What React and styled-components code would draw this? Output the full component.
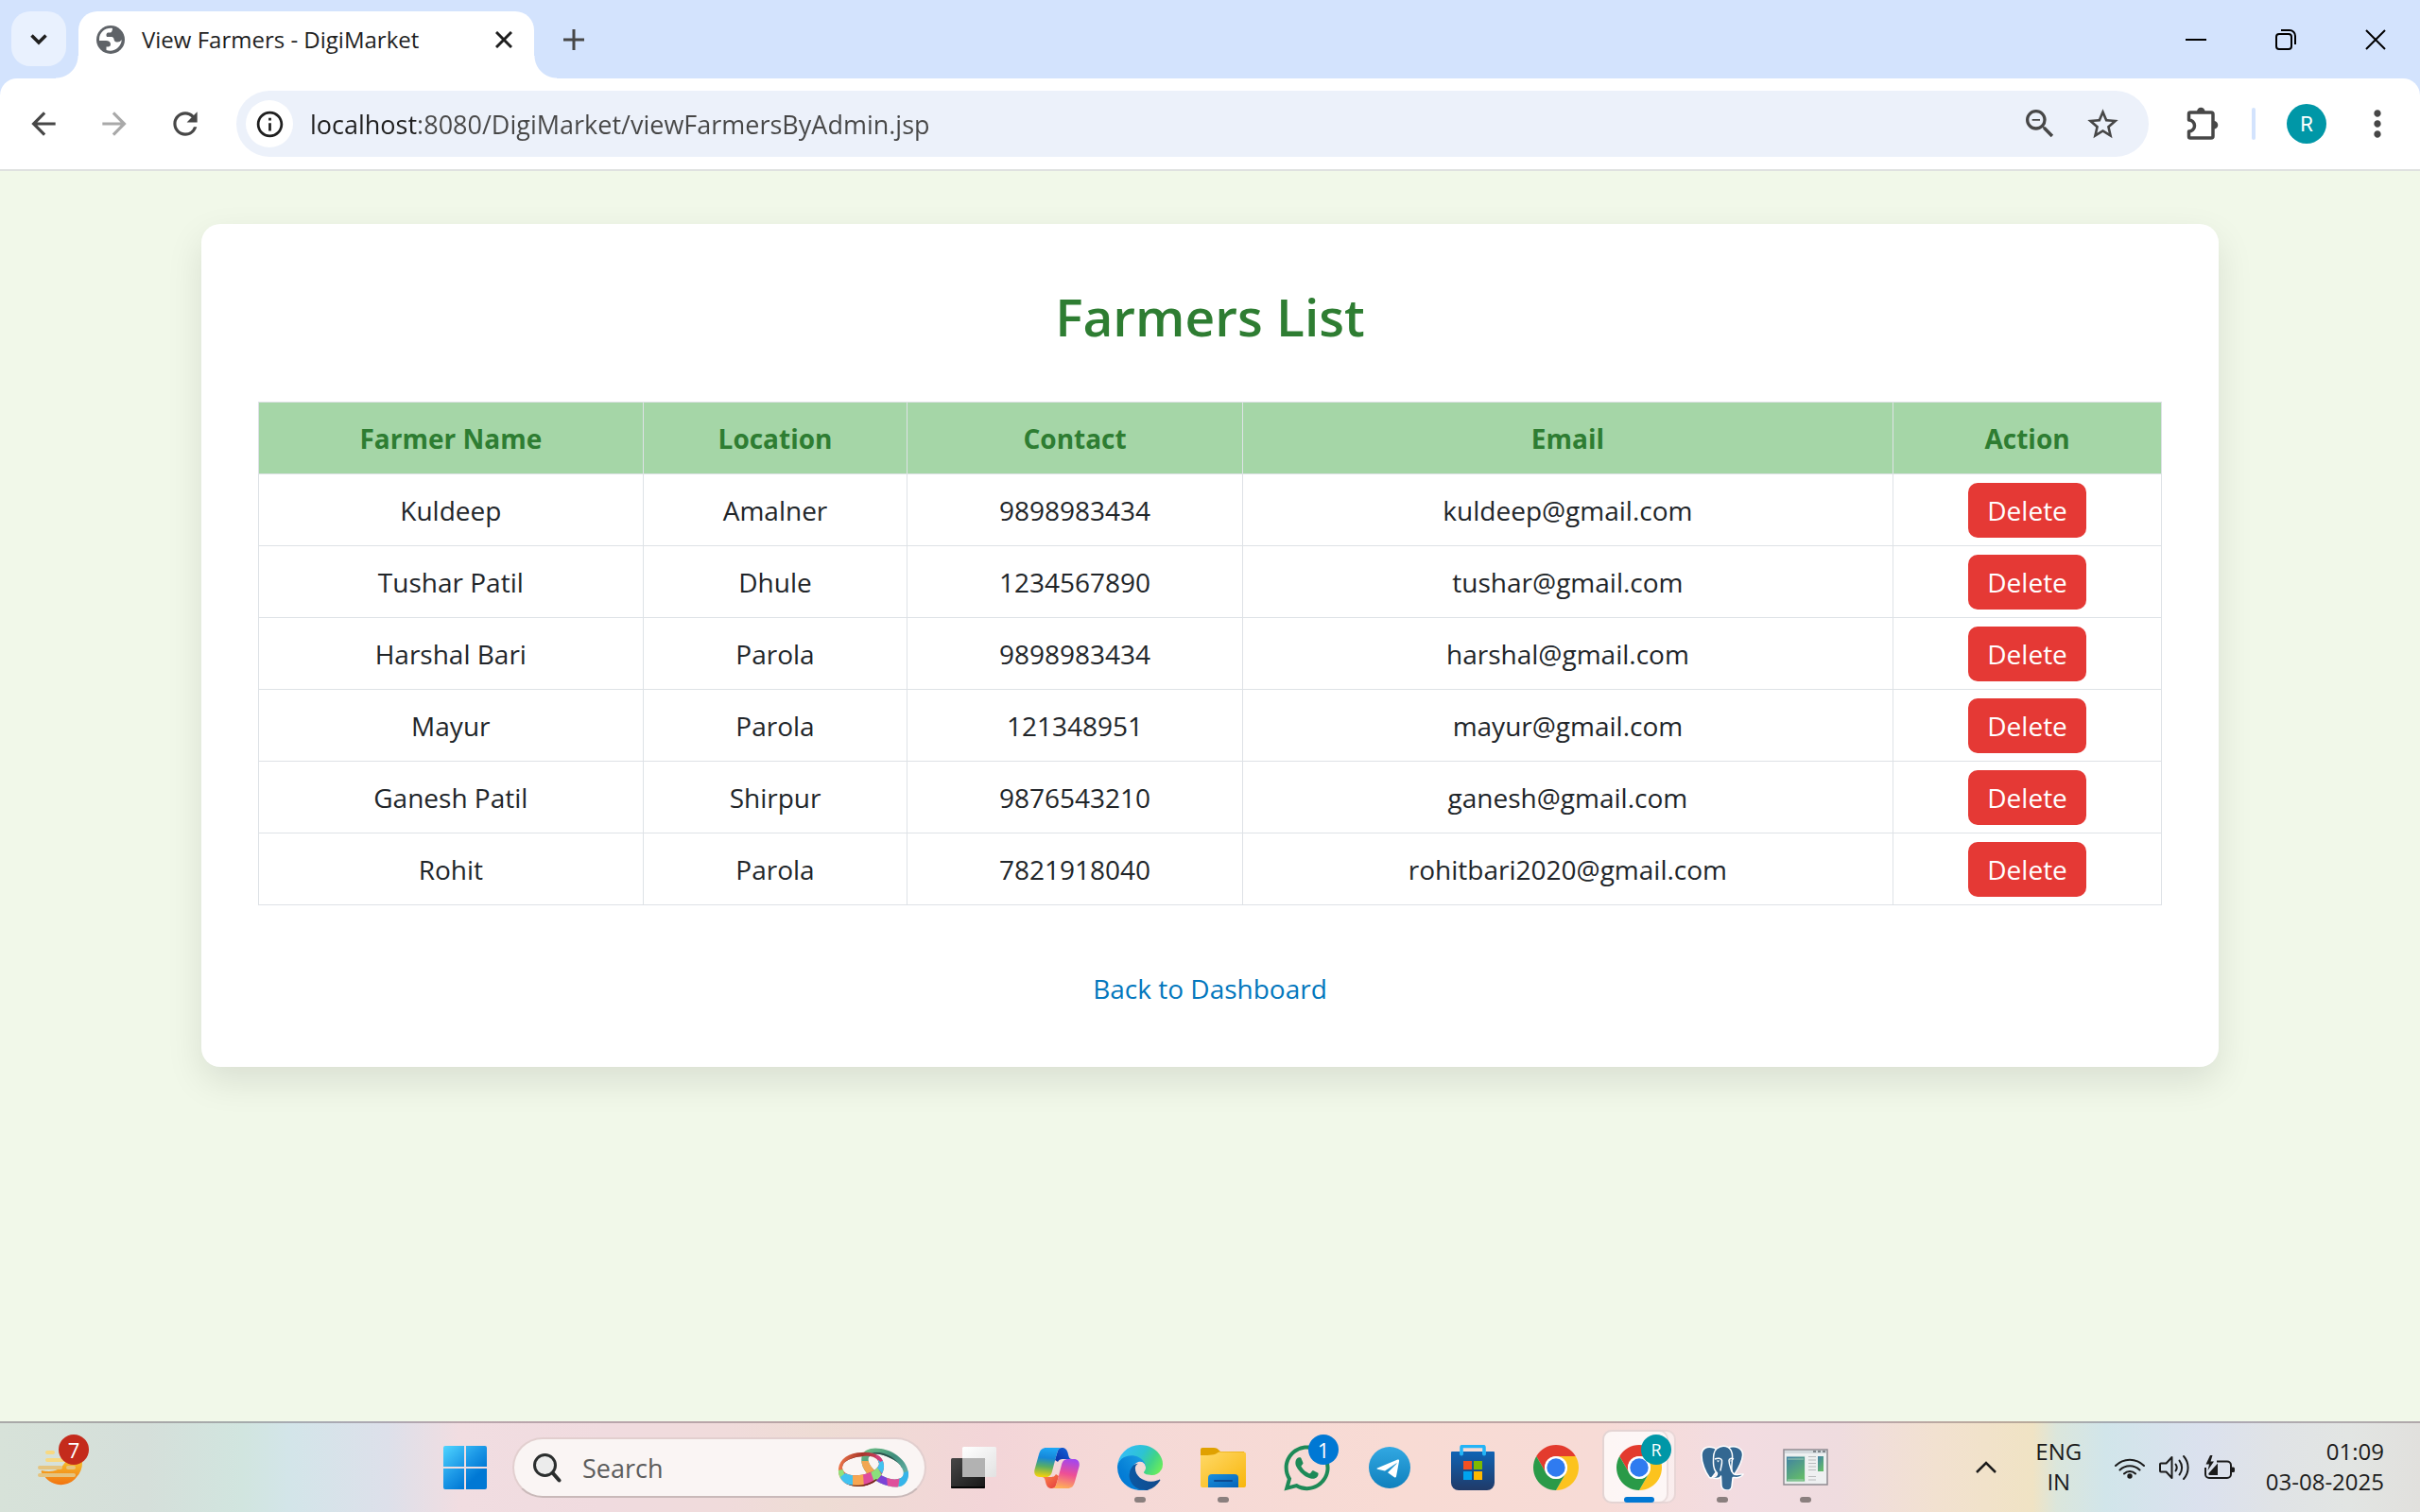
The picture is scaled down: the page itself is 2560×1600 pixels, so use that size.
import React from "react";
import styled, { createGlobalStyle, css } from "styled-components";
import {
  MdArrowBack,
  MdArrowForward,
  MdRefresh,
  MdInfoOutline,
  MdZoomOut,
  MdStarBorder,
  MdMoreVert,
} from "react-icons/md";
import { FaWhatsapp } from "react-icons/fa";

const GlobalStyle = createGlobalStyle`
  *, *::before, *::after { box-sizing: border-box; }
  body {
    margin: 0;
    font-family: "Open Sans", "Noto Sans", sans-serif;
    color: #212529;
    background: #f1f8e9;
  }
  button, input { font-family: inherit; }
`;

const Screen = styled.div`
  min-height: 100vh;
  display: flex;
  flex-direction: column;
`;

const PlainButton = styled.button`
  display: flex;
  align-items: center;
  justify-content: center;
  flex: none;
  padding: 0;
  border: 0;
  background: transparent;
  color: #474747;
`;

/* ---------- browser frame ---------- */

const BrowserFrame = styled.header`
  background: #d3e3fd;
`;

const TabStrip = styled.div`
  display: flex;
  align-items: center;
  height: 83px;
  padding: 12px 0 0 12px;
`;

const TabSearchButton = styled(PlainButton)`
  align-self: flex-start;
  width: 58px;
  height: 58px;
  border-radius: 20px;
  background: #e9f1fe;
  color: #1f1f1f;
`;

const Tab = styled.div`
  position: relative;
  display: flex;
  align-items: center;
  width: 482px;
  height: 71px;
  margin-left: 13px;
  padding: 0 18px 12px 19px;
  border-radius: 20px 20px 0 0;
  background: #fff;

  &::before,
  &::after {
    content: "";
    position: absolute;
    bottom: 0;
    width: 24px;
    height: 24px;
  }
  &::before {
    right: 100%;
    background: radial-gradient(circle at 0 0, transparent 23px, #fff 24px);
  }
  &::after {
    left: 100%;
    background: radial-gradient(circle at 100% 0, transparent 23px, #fff 24px);
  }
`;

const TabTitle = styled.span`
  flex: 1;
  margin-left: 18px;
  font-size: 24px;
  line-height: 32px;
  white-space: nowrap;
  color: #1f1f1f;
`;

const TabAction = styled(PlainButton)`
  width: 28px;
  height: 28px;
  color: #1f1f1f;
`;

const NewTabButton = styled(PlainButton)`
  width: 48px;
  height: 48px;
  margin: 0 0 12px 18px;
`;

const WindowControls = styled.div`
  display: flex;
  margin: 0 0 12px auto;
`;

const WindowButton = styled(PlainButton)`
  width: 95px;
  height: 58px;
  color: #000;
`;

const Toolbar = styled.div`
  display: flex;
  align-items: center;
  height: 98px;
  padding: 0 20px 0 8px;
  border-bottom: 2px solid #dfe1e0;
  border-radius: 18px 18px 0 0;
  background: #fff;
`;

const NavButton = styled(PlainButton)`
  width: 75px;
  height: 60px;
  color: ${(p) => (p.disabled ? "#a9a9a9" : "#474747")};
`;

const AddressBar = styled.div`
  display: flex;
  align-items: center;
  flex: 1;
  height: 70px;
  margin-left: 17px;
  padding: 0 16px 0 10px;
  border-radius: 35px;
  background: #ecf1fa;
`;

const SiteInfoButton = styled(PlainButton)`
  width: 50px;
  height: 50px;
  border-radius: 50%;
  background: #fff;
  color: #1f1f1f;
`;

/* The host is painted darker than the path that follows it. */
const UrlInput = styled.input`
  flex: 1;
  min-width: 0;
  height: 50px;
  margin-left: 18px;
  padding: 0;
  border: 0;
  outline: 0;
  font-size: 27px;
  color: #474747;
  background: linear-gradient(90deg, #1f1f1f 114px, #474747 114px);
  -webkit-background-clip: text;
  background-clip: text;
  -webkit-text-fill-color: transparent;
`;

const AddressAction = styled(PlainButton)`
  width: 66px;
  height: 50px;
`;

const ExtensionsButton = styled(PlainButton)`
  width: 60px;
  height: 60px;
  margin-left: 27px;
`;

const ToolbarDivider = styled.span`
  width: 4px;
  height: 34px;
  margin: 0 33px 0 22px;
  border-radius: 2px;
  background: #d3e3fd;
`;

const ProfileButton = styled(PlainButton)`
  width: 42px;
  height: 42px;
  border-radius: 50%;
  background: #0097a7;
  color: #fff;
  font-family: Roboto, sans-serif;
  font-size: 22px;
`;

const MenuButton = styled(PlainButton)`
  width: 50px;
  height: 60px;
  margin-left: 29px;
`;

/* ---------- page ---------- */

const Page = styled.main`
  flex: 1;
  padding: 56px 40px;
`;

const Card = styled.section`
  max-width: 2134px;
  margin: 0 auto;
  padding: 60px;
  border-radius: 20px;
  background: #fff;
  box-shadow: 0 15px 38px rgba(0, 0, 0, 0.1);
  text-align: center;
`;

const Title = styled.h1`
  margin: 0 0 52px;
  font-size: 55px;
  font-weight: 600;
  line-height: 76px;
  color: #2e7d32;
`;

const FarmersTable = styled.table`
  width: 100%;
  table-layout: fixed;
  border-collapse: collapse;
  font-size: 28px;
  line-height: 42px;
`;

const Column = styled.col`
  width: ${(p) => p.$share}%;
`;

const cell = css`
  height: 76px;
  padding: 0 8px;
  border: 1px solid #dee2e6;
  text-align: center;
  vertical-align: middle;
`;

const HeadCell = styled.th`
  ${cell}
  background: #a5d6a7;
  color: #2e7d32;
  font-weight: 700;
`;

const Cell = styled.td`
  ${cell}
`;

const DeleteButton = styled.button`
  display: block;
  height: 58px;
  margin: 0 auto;
  padding: 0 20px;
  border: 0;
  border-radius: 10px;
  background: #e53935;
  color: #fff;
  font-size: 28px;
`;

const BackLink = styled.a`
  display: inline-block;
  margin-top: 66px;
  font-size: 28px;
  line-height: 45px;
  color: #0277bd;
  text-decoration: none;
`;

/* ---------- taskbar ---------- */

const Taskbar = styled.footer`
  display: flex;
  align-items: stretch;
  height: 96px;
  border-top: 2px solid rgba(90, 70, 80, 0.36);
  background: linear-gradient(
    90deg,
    #d7e2d9 0%,
    #d5dfda 6%,
    #d1e5df 10%,
    #d3e5e9 12%,
    #dde0ea 16%,
    #f1dde1 19%,
    #f0dbdf 25%,
    #f0dbdb 30%,
    #eedcd4 34%,
    #f3d5d8 41%,
    #f5d9d7 46%,
    #f8dbd4 58%,
    #f7dbd6 66%,
    #f2dce1 72%,
    #efdcdf 76%,
    #f2e1d0 80%,
    #f0e3c4 84%,
    #dbe6dc 85%,
    #d1e5ea 87%,
    #dbe1ee 91%,
    #e0e3e6 94%,
    #e2e5e3 97%,
    #e1e0dd 100%
  );
`;

const WidgetArea = styled.div`
  display: flex;
  align-items: center;
  width: 448px;
  padding-left: 34px;
`;

const TaskButton = styled(PlainButton)`
  position: relative;
  width: 88px;
  height: 94px;
`;

const WidgetButton = styled(TaskButton)`
  width: 60px;
`;

const CountBadge = styled.span`
  position: absolute;
  top: 12px;
  right: ${(p) => p.$right}px;
  display: flex;
  align-items: center;
  justify-content: center;
  width: 32px;
  height: 32px;
  border-radius: 50%;
  background: ${(p) => p.$color};
  color: #fff;
  font-size: ${(p) => (p.$small ? 18 : 22)}px;
  line-height: 32px;
`;

const RunningMark = styled.span`
  position: absolute;
  bottom: 10px;
  left: 50%;
  width: ${(p) => (p.$active ? 32 : 12)}px;
  height: 6px;
  border-radius: 3px;
  background: ${(p) => (p.$active ? "#0078d4" : "#8a7f7e")};
  transform: translateX(-50%);
`;

const ActiveTile = styled.span`
  position: absolute;
  top: 7px;
  left: 5px;
  width: ${(p) => p.$width}px;
  height: 78px;
  border: 2px solid rgba(170, 130, 130, 0.22);
  border-radius: 10px;
  background: rgba(255, 255, 255, 0.5);
`;

const IconLayer = styled.span`
  position: relative;
  display: flex;
`;

const TaskSearch = styled.label`
  display: flex;
  align-items: center;
  align-self: center;
  width: 438px;
  height: 64px;
  margin: 0 6px;
  padding: 0 16px 0 20px;
  border: 2px solid #e2cfcf;
  border-bottom-color: #c9b9b9;
  border-radius: 32px;
  background: #faf5f4;
`;

const TaskSearchInput = styled.input`
  flex: 1;
  min-width: 0;
  margin-left: 22px;
  padding: 0;
  border: 0;
  outline: 0;
  background: transparent;
  font-size: 27px;
  color: #5c5c5c;

  &::placeholder {
    color: #5c5c5c;
    opacity: 1;
  }
`;

const Tray = styled.div`
  display: flex;
  align-items: center;
  margin-left: auto;
  padding-right: 38px;
  color: #1b1b1b;
`;

const TrayButton = styled(PlainButton)`
  color: #1b1b1b;
`;

const OverflowButton = styled(TrayButton)`
  width: 44px;
  height: 60px;
`;

const TrayText = styled(TrayButton)`
  flex-direction: column;
  align-items: ${(p) => p.$align};
  padding-bottom: 2px;
  font-size: 24px;
  line-height: 32px;
`;

const LanguageButton = styled(TrayText)`
  width: 70px;
  margin-left: 20px;
`;

const StatusButton = styled(TrayButton)`
  gap: 15px;
  margin: 0 32px 0 24px;
`;

/* ---------- drawings ---------- */

const Stroke = ({ size, width = 3, children }) => (
  <svg
    width={size}
    height={size}
    viewBox={`0 0 ${size} ${size}`}
    fill="none"
    stroke="currentColor"
    strokeWidth={width}
    aria-hidden="true"
  >
    {children}
  </svg>
);

const Globe = () => (
  <svg width="30" height="30" viewBox="0 0 30 30" aria-hidden="true">
    <circle cx="15" cy="15" r="15" fill="#5f6368" />
    <path
      fill="#fff"
      d="M17 3C10 2 3 7 3 14.500V16h7c3 0 5 1.500 5 4 0 1.500-1 2.500-2.500 2.500H10.500V26C18 29 26.500 23 26.700 15c-1 1.800-3 2.700-5 2.500-2.200-.2-3-1.500-3.200-3.300-.2-1.700-1.500-2.200-3.500-2.200H11c-1-1.500-.7-4 1-4.500h2.500C16 7.500 17 5.500 17 3Z"
    />
  </svg>
);

const Puzzle = () => (
  <svg width="36" height="36" viewBox="0 0 36 36" aria-hidden="true">
    <path
      d="M3.500 7.500a1.500 1.500 0 0 1 1.500-1.500H27a2 2 0 0 1 2 2V31a2 2 0 0 1-2 2H5a1.500 1.500 0 0 1-1.500-1.500V26a6 6 0 0 0 0-12z"
      fill="none"
      stroke="#474747"
      strokeWidth="3.500"
      strokeLinejoin="round"
    />
    <path d="M12 5a4.300 4.300 0 0 1 8.600 0zM30 15a4.300 4.300 0 0 1 0 8.600z" fill="#474747" />
  </svg>
);

const Weather = () => (
  <svg width="48" height="38" viewBox="0 0 48 38" aria-hidden="true">
    <defs>
      <linearGradient id="sun" x1="0" y1="0" x2="0" y2="1">
        <stop offset="0" stopColor="#f5bd2c" />
        <stop offset="1" stopColor="#f27410" />
      </linearGradient>
    </defs>
    <path
      d="M47 12a23 23 0 0 1-6 17C33 40 15 40 7 28c-3-3-4-4-3-6 9 2 18 1 23-6l3-4z"
      fill="url(#sun)"
    />
    <g strokeWidth="4" strokeLinecap="round">
      <path d="M10 3h6M24 3h8M10 11h36" stroke="#f8d982" />
      <path d="M2 19h22M32 19h6M2 27h36" stroke="#e5c47f" />
    </g>
  </svg>
);

const WindowsLogo = () => (
  <svg width="46" height="46" viewBox="0 0 46 46" aria-hidden="true">
    <defs>
      <linearGradient id="win" gradientUnits="userSpaceOnUse" x1="0" y1="0" x2="40" y2="44">
        <stop offset="0" stopColor="#50d5ff" />
        <stop offset="0.500" stopColor="#1b97e6" />
        <stop offset="0.800" stopColor="#0078d4" />
      </linearGradient>
    </defs>
    <path
      fill="url(#win)"
      d="M2 0H22V22H0V2A2 2 0 0 1 2 0ZM24 0H44A2 2 0 0 1 46 2V22H24ZM0 24H22V46H2A2 2 0 0 1 0 44ZM24 24H46V44A2 2 0 0 1 44 46H24Z"
    />
  </svg>
);

const Magnifier = () => (
  <svg width="30" height="31" viewBox="0 0 30 31" fill="none" aria-hidden="true">
    <circle cx="12.500" cy="12.500" r="11" fill="#ececec" stroke="#2b2e2e" strokeWidth="3" />
    <path d="M20.500 20.500l7 8" stroke="#2b2e2e" strokeWidth="4" strokeLinecap="round" />
  </svg>
);

/* Two interlocked bands; each band is an outer ellipse with an offset hole, cut into coloured segments. */
const Rings = () => (
  <svg width="76" height="42" viewBox="0 0 76 42" aria-hidden="true">
    <defs>
      <clipPath id="ringRight">
        <path
          clipRule="evenodd"
          d="M26 8C28 2 36-1 46 1 60 3 74 14 75 27c0 8-4 14-12 14.500C52 42 38 35 31 27 26 21 24 14 26 8ZM33 10c-2 5 3 12 10 17 8 6 18 8 24 5 5-3 3-10-3-16C56 9 36 2 33 10Z"
        />
      </clipPath>
      <clipPath id="ringLeft">
        <path
          clipRule="evenodd"
          d="M1 22C2 12 12 5 26 5c13-1 22 4 23 13 1 11-9 22-26 23C9 41 0 34 1 22ZM5 21c1 7 9 9 18 8 11-1 20-6 21-12C43 10 35 8 27 9 15 10 5 14 5 21Z"
        />
      </clipPath>
      <linearGradient id="rimRed" x1="0" y1="0" x2="1" y2="0">
        <stop offset="0" stopColor="#f0784a" />
        <stop offset="0.500" stopColor="#a83428" />
        <stop offset="1" stopColor="#d8437c" />
      </linearGradient>
      <linearGradient id="rimGreen" x1="0" y1="0" x2="1" y2="1">
        <stop offset="0" stopColor="#8fe08a" />
        <stop offset="0.500" stopColor="#3e8d7c" />
        <stop offset="1" stopColor="#7ec9c0" />
      </linearGradient>
    </defs>
    <g clipPath="url(#ringRight)">
      <path d="M0 0H76V42H0Z" fill="url(#rimGreen)" />
      <path d="M33 7c12-6 28 2 35 14l-2 4C58 13 46 7 33 10Z" fill="#2b4f4a" />
      <path d="M24 14h16v14H24Z" fill="#f2a652" />
      <path d="M40 26l12 2 2 14H34Z" fill="#7b43d6" />
      <path d="M52 30h14l-2 12H53Z" fill="#df4f9b" />
      <path d="M66 28l10-4v14l-11 4Z" fill="#35b4ea" />
    </g>
    <g clipPath="url(#ringLeft)">
      <path d="M0 0H52V42H0Z" fill="url(#rimRed)" />
      <path d="M5 19C10 8 34 5 44 15l-2 3C34 8 12 10 6 20Z" fill="#7c241c" />
      <path d="M0 24l6-1 2 8-6 4Z" fill="#8fe27c" />
      <path d="M3 31l5-4 8 2v13H8Z" fill="#42c2f0" />
      <path d="M16 28h12v14H16Z" fill="#f6a652" />
      <path d="M27 28l9-3 3 12-11 5Z" fill="#e04c9c" />
      <path d="M35 25l7-5 5 9-8 8Z" fill="#8be07c" />
      <path d="M42 21l1-8 8 1-2 16Z" fill="#42c2f0" />
      <path d="M40 9l5 6 5-2-5-7Z" fill="#d23f7c" />
      <path d="M5 36c9 6 25 5 36-3l2 2C33 43 12 44 4 37Z" fill="#6d2415" />
    </g>
  </svg>
);

const TaskView = () => (
  <svg width="48" height="44" viewBox="0 0 48 44" aria-hidden="true">
    <defs>
      <linearGradient id="tvDark" x1="0" y1="0" x2="1" y2="1">
        <stop offset="0" stopColor="#474747" />
        <stop offset="1" stopColor="#161616" />
      </linearGradient>
      <linearGradient id="tvLight" x1="0" y1="0" x2="1" y2="1">
        <stop offset="0" stopColor="#fff" />
        <stop offset="1" stopColor="#e2e2e2" />
      </linearGradient>
    </defs>
    <rect x="12" width="36" height="32" rx="1.500" fill="url(#tvLight)" />
    <rect y="12" width="36" height="32" rx="1.500" fill="url(#tvDark)" />
    <path d="M0 42h36v.5a1.500 1.500 0 0 1-1.500 1.500h-33a1.500 1.500 0 0 1-1.500-1.500z" fill="#050505" />
    <path d="M12 12h24v20H12z" fill="#b2b2b2" />
  </svg>
);

const Copilot = () => (
  <svg width="48" height="43" viewBox="0 0 48 43" aria-hidden="true">
    <defs>
      <linearGradient id="cpLeft" x1="0.500" y1="0" x2="0.400" y2="1">
        <stop offset="0" stopColor="#1ea7f5" />
        <stop offset="0.350" stopColor="#1687d8" />
        <stop offset="0.650" stopColor="#5aae62" />
        <stop offset="1" stopColor="#f5d20c" />
      </linearGradient>
      <linearGradient id="cpRight" x1="0.600" y1="0" x2="0.400" y2="1">
        <stop offset="0" stopColor="#a347ee" />
        <stop offset="0.500" stopColor="#ee4f95" />
        <stop offset="1" stopColor="#ffb057" />
      </linearGradient>
      <linearGradient id="cpTop" x1="0" y1="1" x2="1" y2="0">
        <stop offset="0" stopColor="#0a2fa8" />
        <stop offset="1" stopColor="#1568dd" />
      </linearGradient>
      <linearGradient id="cpBottom" x1="0" y1="0" x2="1" y2="1">
        <stop offset="0" stopColor="#ff8a4a" />
        <stop offset="1" stopColor="#e33b3f" />
      </linearGradient>
    </defs>
    <path d="M22 13 25 3C26 1 27 0 29 0c4 0 5.500 2 6.500 5l1 4c.5 2 1.500 3 3.500 3h-8c-4 0-5 0-7 3z" fill="url(#cpTop)" />
    <path d="M26 30 23 40c-1 2-2 3-4 3-4 0-5.500-2-6.500-5l-1-4c-.5-2-1.500-3-3.500-3h8c4 0 5 0 7-3z" fill="url(#cpBottom)" />
    <path d="M13 0H29c-3 0-4 3-5 6L19 25c-1 4-3 6-7 6H6C1 31-.500 27 .5 23L5 7C6.500 2 8.500 0 13 0Z" fill="url(#cpLeft)" />
    <path d="M35 43H19c3 0 4-3 5-6L29 18c1-4 3-6 7-6h6c5 0 6.500 4 5.500 8L43 36c-1.500 5-3.500 7-8 7Z" fill="url(#cpRight)" />
  </svg>
);

const Edge = () => (
  <svg width="48" height="48" viewBox="0 0 256 256" aria-hidden="true">
    <defs>
      <linearGradient id="edDark" x1="0" y1="0.700" x2="1" y2="0.700">
        <stop offset="0" stopColor="#0c59a4" />
        <stop offset="1" stopColor="#114a8b" />
      </linearGradient>
      <linearGradient id="edBlue" x1="0.900" y1="0.200" x2="0.200" y2="0.900">
        <stop offset="0" stopColor="#1b9de2" />
        <stop offset="0.160" stopColor="#1595df" />
        <stop offset="0.670" stopColor="#0680d7" />
        <stop offset="1" stopColor="#0078d4" />
      </linearGradient>
      <linearGradient id="edGreen" x1="0.050" y1="0.300" x2="1" y2="0.700">
        <stop offset="0" stopColor="#35bdf5" />
        <stop offset="0.450" stopColor="#2dc3d2" />
        <stop offset="0.720" stopColor="#3fd38a" />
        <stop offset="1" stopColor="#6aec5c" />
      </linearGradient>
    </defs>
    <path fill="url(#edDark)" d="M235.680 195.460a93.730 93.730 0 0 1-10.540 4.710 101.870 101.870 0 0 1-35.900 6.460c-47.320 0-88.540-32.550-88.540-74.320a31.480 31.480 0 0 1 16.430-27.310c-42.800 1.800-53.800 46.400-53.800 72.530 0 73.880 68.090 81.370 82.760 81.370 7.910 0 19.840-2.300 27-4.560l1.310-.440a128.340 128.340 0 0 0 66.600-52.800 4 4 0 0 0-5.320-5.640Z" />
    <path fill="url(#edBlue)" d="M105.730 241.420A79.200 79.200 0 0 1 83 220.100a80.720 80.720 0 0 1 29.500-120.800c3.120-1.470 8.450-4.130 15.540-4a32.350 32.350 0 0 1 25.690 13 31.880 31.880 0 0 1 6.360 18.660c0-.210 24.460-79.600-80-79.600-43.900 0-80 41.660-80 78.210a130.150 130.150 0 0 0 12.110 56 128 128 0 0 0 156.380 67.110 75.550 75.550 0 0 1-62.780-8Z" />
    <path fill="url(#edGreen)" d="M152.330 148.860c-.810 1.050-3.300 2.500-3.300 5.660 0 2.610 1.700 5.120 4.720 7.230 14.380 10 41.490 8.680 41.560 8.680a59.560 59.560 0 0 0 30.270-8.350A61.380 61.380 0 0 0 256 109.190c.260-22.410-8-37.310-11.340-43.910C223.460 23.840 177.720 0 128 0A128 128 0 0 0 0 126.200c.480-36.540 36.800-66.050 80-66.050 3.500 0 23.460.340 42 10.070 16.340 8.580 24.900 18.940 30.850 29.210 6.180 10.670 7.280 24.150 7.280 29.520 0 5.370-2.740 13.330-7.800 19.910Z" />
  </svg>
);

const Folder = () => (
  <svg width="48" height="42" viewBox="0 0 48 42" aria-hidden="true">
    <defs>
      <linearGradient id="foBody" x1="0" y1="0" x2="1" y2="1">
        <stop offset="0" stopColor="#ffd968" />
        <stop offset="1" stopColor="#f8b60c" />
      </linearGradient>
      <linearGradient id="foBlue" x1="0" y1="0" x2="1" y2="1">
        <stop offset="0" stopColor="#1b90dd" />
        <stop offset="1" stopColor="#0563b8" />
      </linearGradient>
    </defs>
    <path d="M2 0H14c3 0 4 1 6 3l1 1H46v6H0V2A2 2 0 0 1 2 0Z" fill="#e0a100" />
    <path d="M0 8C6 8 14 8 17 6c1-.8 2-1.500 4-1.500H46a2 2 0 0 1 2 2V40a2 2 0 0 1-2 2H2a2 2 0 0 1-2-2Z" fill="url(#foBody)" />
    <path d="M8 42V32a4 4 0 0 1 4-4H36a4 4 0 0 1 4 4V42Z" fill="url(#foBlue)" />
    <path d="M15 35H33" stroke="#0b4a92" strokeWidth="2" strokeLinecap="round" />
  </svg>
);

const Telegram = () => (
  <svg width="44" height="44" viewBox="0 0 44 44" aria-hidden="true">
    <defs>
      <linearGradient id="tg" x1="0" y1="0" x2="0" y2="1">
        <stop offset="0" stopColor="#32a8e2" />
        <stop offset="1" stopColor="#0f80bd" />
      </linearGradient>
    </defs>
    <circle cx="22" cy="22" r="22" fill="url(#tg)" />
    <path d="M9 22.500 30.500 13.500c1-.4 1.800.2 1.600 1.500L29 31.500c-.2 1.100-1 1.400-2 .8l-7-5 9.500-9.600c.4-.5 0-.7-.5-.3L17 25.500l-7.600-1.800c-1.100-.3-1.200-.9-.4-1.200Z" fill="#fff" />
  </svg>
);

const Store = () => (
  <svg width="46" height="48" viewBox="0 0 46 48" aria-hidden="true">
    <defs>
      <linearGradient id="stBag" x1="0" y1="0" x2="0" y2="1">
        <stop offset="0" stopColor="#0f63b4" />
        <stop offset="1" stopColor="#203a68" />
      </linearGradient>
    </defs>
    <path d="M11 11V2.500a1 1 0 0 1 1-1H34a1 1 0 0 1 1 1V11" fill="none" stroke="#24b4f6" strokeWidth="3.500" />
    <path d="M0 8a1 1 0 0 1 1-1H45a1 1 0 0 1 1 1V40a8 8 0 0 1-8 8H8a8 8 0 0 1-8-8Z" fill="url(#stBag)" />
    <path d="M9 7V9.500a2 2 0 0 0 4 0V7M33 7V9.500a2 2 0 0 0 4 0V7" fill="#24b4f6" />
    <path d="M13 17h9v9h-9z" fill="#f25022" />
    <path d="M24 17h9v9h-9z" fill="#7fba00" />
    <path d="M13 28h9v9h-9z" fill="#00a4ef" />
    <path d="M24 28h9v9h-9z" fill="#ffb900" />
  </svg>
);

const Chrome = () => (
  <svg width="48" height="48" viewBox="0 0 48 48" aria-hidden="true">
    <path d="M24 12H44.780A24 24 0 0 0 3.220 12L13.610 30A12 12 0 0 1 24 12Z" fill="#e33b2e" />
    <path d="M34.390 30L24 48A24 24 0 0 0 44.780 12H24A12 12 0 0 1 34.390 30Z" fill="#fcc31e" />
    <path d="M13.610 30L3.220 12A24 24 0 0 0 24 48L34.390 30A12 12 0 0 1 13.610 30Z" fill="#2a9a48" />
    <circle cx="24" cy="24" r="12" fill="#fff" />
    <circle cx="24" cy="24" r="9.700" fill="#2f7bf0" />
  </svg>
);

const ServerWindow = () => (
  <svg width="48" height="40" viewBox="0 0 48 40" aria-hidden="true">
    <defs>
      <linearGradient id="swPane" x1="0" y1="0" x2="0.500" y2="1">
        <stop offset="0" stopColor="#3f7fa6" />
        <stop offset="1" stopColor="#62b96c" />
      </linearGradient>
    </defs>
    <rect x="1" y="1" width="46" height="37" fill="#eef0f1" stroke="#8f8b91" strokeWidth="1.500" />
    <path d="M2 2H46V5H2z" fill="#d4dade" />
    <path d="M32 3h3M37 3h3M42 3h3" stroke="#7f868c" strokeWidth="2" />
    <rect x="3.500" y="8" width="20" height="27" fill="url(#swPane)" stroke="#dfe9e6" />
    <path d="M5 11H22M5 33H22" stroke="#a3cdb8" strokeWidth="1" />
    <path d="M27 8.500h8M27 12h8M27 15.500h8M27 19h8M27 22.500h8M27 29.500h8M27 33h8" stroke="#b9bcbe" strokeWidth="1.200" />
    <rect x="37" y="8" width="6" height="16" fill="url(#swPane)" />
  </svg>
);

const Elephant = () => (
  <svg width="48" height="48" viewBox="0 0 48 48" aria-hidden="true">
    <g stroke="#fff" strokeWidth="1.500" strokeLinejoin="round" fill="#336791">
      <path d="M15 3C8 1 2 3 2 11c0 8 4 18 8 23 2 2 3 1 5-2l3-4V5z" />
      <path d="M30 3c7-3 16 0 15.500 8-.5 7-4 13-8.500 20l-5-4V5z" />
      <path d="M18 4c6-5 14-3 16 4 2 6-1 12 0 19 .5 3 2 5 6 4.500 3 0 5-1 6-.5-1 3-6 4-9 3.500-1 0-2-.5-2 .5l-1 9c-.5 3-2 4-5 4-4 0-5.500-2-6-5l-.5-10c-.5 2-3 2.500-5 2.500-1.500 0-4-.5-4-1.500 3 0 5-1 5-4-3-3-4-6-4-11 0-7 0-12 3.500-15z" />
      <path d="M16 15c3-1.500 7-1 7.500 1.500.5 4-1.500 8-1.500 11" fill="none" />
      <path d="M36 15c-2-1-5-1-5 1.500 0 4 2 8 3 12" fill="none" />
    </g>
    <path d="M18 16.500h3l-1.500 2zM32 16.500h2l-1 1.500z" fill="#fff" />
  </svg>
);

const Wifi = () => (
  <svg width="32" height="26" viewBox="0 0 32 26" fill="none" stroke="currentColor" strokeWidth="2" strokeLinecap="round" aria-hidden="true">
    <path d="M1 11a21 21 0 0 1 30 0M5.500 15.500a15 15 0 0 1 21 0M10 19.500a8.500 8.500 0 0 1 12 0" />
    <circle cx="16" cy="22" r="2.700" fill="currentColor" stroke="none" />
  </svg>
);

const Speaker = () => (
  <svg width="33" height="28" viewBox="0 0 33 28" fill="none" stroke="currentColor" strokeWidth="2" strokeLinejoin="round" strokeLinecap="round" aria-hidden="true">
    <path d="M2 9.500h5.500l6-6.500v22l-6-6.500H2a1 1 0 0 1-1-1v-7a1 1 0 0 1 1-1z" />
    <path d="M17.500 10.500a6 6 0 0 1 0 7M21.500 6.500a12 12 0 0 1 0 15M26 2a18 18 0 0 1 0 24" />
  </svg>
);

const Battery = () => (
  <svg width="33" height="28" viewBox="0 0 33 28" fill="none" stroke="currentColor" strokeWidth="2" aria-hidden="true">
    <path d="M13 7.500H24a4 4 0 0 1 4 4V21a4 4 0 0 1-4 4H5a4 4 0 0 1-4-4V14" />
    <path d="M28 13.500h2.500a1.500 1.500 0 0 1 1.500 1.500v2.500a1.500 1.500 0 0 1-1.500 1.500H28z" fill="currentColor" stroke="none" />
    <path d="M6 1 1.500 10.500H5L3.500 17 10 7.500H6.500L8.500 1z" fill="currentColor" stroke="none" />
    <path d="M14 9.500V22H5.500c-1 0-1.500-1-1-2z" fill="currentColor" stroke="none" />
  </svg>
);

/* ---------- data ---------- */

const columns = [
  { label: "Farmer Name", share: 20.2 },
  { label: "Location", share: 13.9 },
  { label: "Contact", share: 17.6 },
  { label: "Email", share: 34.2 },
  { label: "Action", share: 14.1 },
];

const farmers = [
  ["Kuldeep", "Amalner", "9898983434", "kuldeep@gmail.com"],
  ["Tushar Patil", "Dhule", "1234567890", "tushar@gmail.com"],
  ["Harshal Bari", "Parola", "9898983434", "harshal@gmail.com"],
  ["Mayur", "Parola", "121348951", "mayur@gmail.com"],
  ["Ganesh Patil", "Shirpur", "9876543210", "ganesh@gmail.com"],
  ["Rohit", "Parola", "7821918040", "rohitbari2020@gmail.com"],
];

const Browser = () => (
  <BrowserFrame>
    <TabStrip>
      <TabSearchButton aria-label="Search tabs">
        <Stroke size={20} width={3.5}>
          <path d="M2.500 6.500l7.500 7.500 7.500-7.500" />
        </Stroke>
      </TabSearchButton>
      <Tab>
        <Globe />
        <TabTitle>View Farmers - DigiMarket</TabTitle>
        <TabAction aria-label="Close tab">
          <Stroke size={18} width={3}>
            <path d="M1 1l16 16M17 1L1 17" />
          </Stroke>
        </TabAction>
      </Tab>
      <NewTabButton aria-label="New tab">
        <Stroke size={22} width={3}>
          <path d="M11 0v22M0 11h22" />
        </Stroke>
      </NewTabButton>
      <WindowControls>
        <WindowButton aria-label="Minimize">
          <Stroke size={22} width={2}>
            <path d="M0 11h22" />
          </Stroke>
        </WindowButton>
        <WindowButton aria-label="Restore">
          <Stroke size={22} width={2}>
            <rect x="1" y="5" width="16" height="16" rx="3" />
            <path d="M6 1H15a6 6 0 0 1 6 6V16" />
          </Stroke>
        </WindowButton>
        <WindowButton aria-label="Close">
          <Stroke size={22} width={2}>
            <path d="M1 1l20 20M21 1L1 21" />
          </Stroke>
        </WindowButton>
      </WindowControls>
    </TabStrip>
    <Toolbar>
      <NavButton aria-label="Back">
        <MdArrowBack size={38} />
      </NavButton>
      <NavButton aria-label="Forward" disabled>
        <MdArrowForward size={38} />
      </NavButton>
      <NavButton aria-label="Reload">
        <MdRefresh size={38} />
      </NavButton>
      <AddressBar>
        <SiteInfoButton aria-label="View site information">
          <MdInfoOutline size={33} />
        </SiteInfoButton>
        <UrlInput
          aria-label="Address"
          defaultValue="localhost:8080/DigiMarket/viewFarmersByAdmin.jsp"
          spellCheck={false}
        />
        <AddressAction aria-label="Zoom">
          <MdZoomOut size={40} />
        </AddressAction>
        <AddressAction aria-label="Bookmark this tab">
          <MdStarBorder size={39} />
        </AddressAction>
      </AddressBar>
      <ExtensionsButton aria-label="Extensions">
        <Puzzle />
      </ExtensionsButton>
      <ToolbarDivider />
      <ProfileButton aria-label="Profile R">R</ProfileButton>
      <MenuButton aria-label="Menu">
        <MdMoreVert size={44} />
      </MenuButton>
    </Toolbar>
  </BrowserFrame>
);

const FarmersPage = () => (
  <Page>
    <Card>
      <Title>Farmers List</Title>
      <FarmersTable>
        <colgroup>
          {columns.map((c) => (
            <Column key={c.label} $share={c.share} />
          ))}
        </colgroup>
        <thead>
          <tr>
            {columns.map((c) => (
              <HeadCell key={c.label} scope="col">
                {c.label}
              </HeadCell>
            ))}
          </tr>
        </thead>
        <tbody>
          {farmers.map((row) => (
            <tr key={row[0]}>
              {row.map((value) => (
                <Cell key={value}>{value}</Cell>
              ))}
              <Cell>
                <DeleteButton type="button">Delete</DeleteButton>
              </Cell>
            </tr>
          ))}
        </tbody>
      </FarmersTable>
      <BackLink href="#dashboard">Back to Dashboard</BackLink>
    </Card>
  </Page>
);

const DesktopTaskbar = () => (
  <Taskbar>
    <WidgetArea>
      <WidgetButton aria-label="Widgets">
        <Weather />
        <CountBadge $color="#c42b1c" $right={0}>
          7
        </CountBadge>
      </WidgetButton>
    </WidgetArea>
    <TaskButton aria-label="Start">
      <WindowsLogo />
    </TaskButton>
    <TaskSearch>
      <Magnifier />
      <TaskSearchInput placeholder="Search" aria-label="Search" />
      <Rings />
    </TaskSearch>
    <TaskButton aria-label="Task view">
      <TaskView />
    </TaskButton>
    <TaskButton aria-label="Copilot">
      <Copilot />
    </TaskButton>
    <TaskButton aria-label="Edge">
      <Edge />
      <RunningMark />
    </TaskButton>
    <TaskButton aria-label="File Explorer">
      <Folder />
      <RunningMark />
    </TaskButton>
    <TaskButton aria-label="WhatsApp">
      <FaWhatsapp size={55} color="#1d8a57" />
      <CountBadge $color="#0078d4" $right={10}>
        1
      </CountBadge>
    </TaskButton>
    <TaskButton aria-label="Telegram">
      <Telegram />
    </TaskButton>
    <TaskButton aria-label="Microsoft Store">
      <Store />
    </TaskButton>
    <TaskButton aria-label="Chrome">
      <Chrome />
    </TaskButton>
    <TaskButton aria-label="Chrome, profile R">
      <ActiveTile $width={78} />
      <ActiveTile $width={70} />
      <IconLayer>
        <Chrome />
      </IconLayer>
      <CountBadge $color="#0097a7" $right={10} $small>
        R
      </CountBadge>
      <RunningMark $active />
    </TaskButton>
    <TaskButton aria-label="PostgreSQL">
      <Elephant />
      <RunningMark />
    </TaskButton>
    <TaskButton aria-label="Server window">
      <ServerWindow />
      <RunningMark />
    </TaskButton>
    <Tray>
      <OverflowButton aria-label="Show hidden icons">
        <Stroke size={22} width={2.5}>
          <path d="M1 16l10-10 10 10" />
        </Stroke>
      </OverflowButton>
      <LanguageButton $align="center">
        <span>ENG</span>
        <span>IN</span>
      </LanguageButton>
      <StatusButton aria-label="Network, volume and battery">
        <Wifi />
        <Speaker />
        <Battery />
      </StatusButton>
      <TrayText $align="flex-end">
        <span>01:09</span>
        <span>03-08-2025</span>
      </TrayText>
    </Tray>
  </Taskbar>
);

export default function App() {
  return (
    <Screen>
      <GlobalStyle />
      <Browser />
      <FarmersPage />
      <DesktopTaskbar />
    </Screen>
  );
}
